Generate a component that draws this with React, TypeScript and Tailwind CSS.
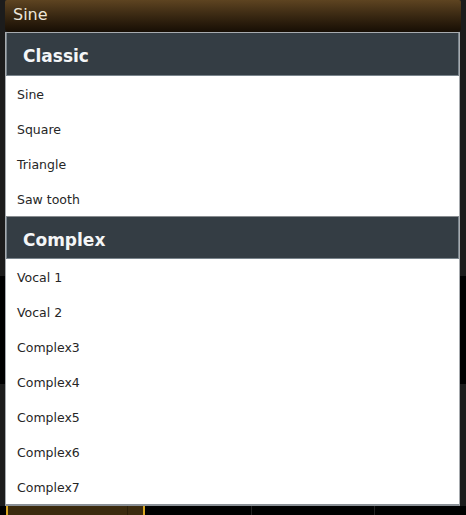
import React from "react";

const classic = ["Sine", "Square", "Triangle", "Saw tooth"];
const complex = ["Vocal 1", "Vocal 2", "Complex3", "Complex4", "Complex5", "Complex6", "Complex7"];

function Header({ label, h }: { label: string; h: string }) {
  return (
    <div className={`${h} shrink-0 flex items-center pl-[16px] pt-[5px] bg-[#343d44] border-x border-b border-[#79848c]`}>
      <span className="text-[17px] font-bold text-[#f4f6f7] leading-none">{label}</span>
    </div>
  );
}

function Item({ label }: { label: string }) {
  return (
    <div className="h-[35px] shrink-0 flex items-center pl-[11px] pt-[4px] text-[12.5px] text-[#262626]">
      {label}
    </div>
  );
}

export default function App() {
  return (
    <div
      className="relative w-[466px] h-[515px] overflow-hidden bg-[#1c1c1c] flex flex-col"
      style={{ fontFamily: '"DejaVu Sans", Verdana, sans-serif' }}
    >
      <div className="h-[32px] mx-[5px] w-[456px] shrink-0 rounded-b-[4px] rounded-t-[2px] bg-gradient-to-b from-[#5e4421] to-[#170e05] flex items-center pl-[8px] pb-[2px]">
        <span className="text-[16px] text-[#ece6da]">Sine</span>
      </div>
      <div className="h-[244px] shrink-0" />
      <div className="h-[108px] shrink-0 bg-black" />
      <div className="flex-1" />
      <div className="h-[9px] shrink-0 flex bg-black">
        <div className="ml-[6px] w-[139px] bg-[#3b2a0e] border-l-2 border-r-2 border-[#d9a520] flex justify-end">
          <div className="w-[16px] border-l border-[#2a1d08]" />
        </div>
        <div className="w-[107px] border-r border-[#222]" />
        <div className="w-[123px] border-r border-[#222]" />
      </div>

      <div className="absolute left-[5px] top-[32px] w-[455px] h-[474px] bg-white border border-[#a7abaf] border-b-2 border-b-[#8a9096] flex flex-col">
        <Header label="Classic" h="h-[43px]" />
        {classic.map((c) => (
          <Item key={c} label={c} />
        ))}
        <div className="h-[1px] bg-[#888c90] shrink-0" />
        <Header label="Complex" h="h-[42px]" />
        {complex.map((c) => (
          <Item key={c} label={c} />
        ))}
      </div>
    </div>
  );
}
